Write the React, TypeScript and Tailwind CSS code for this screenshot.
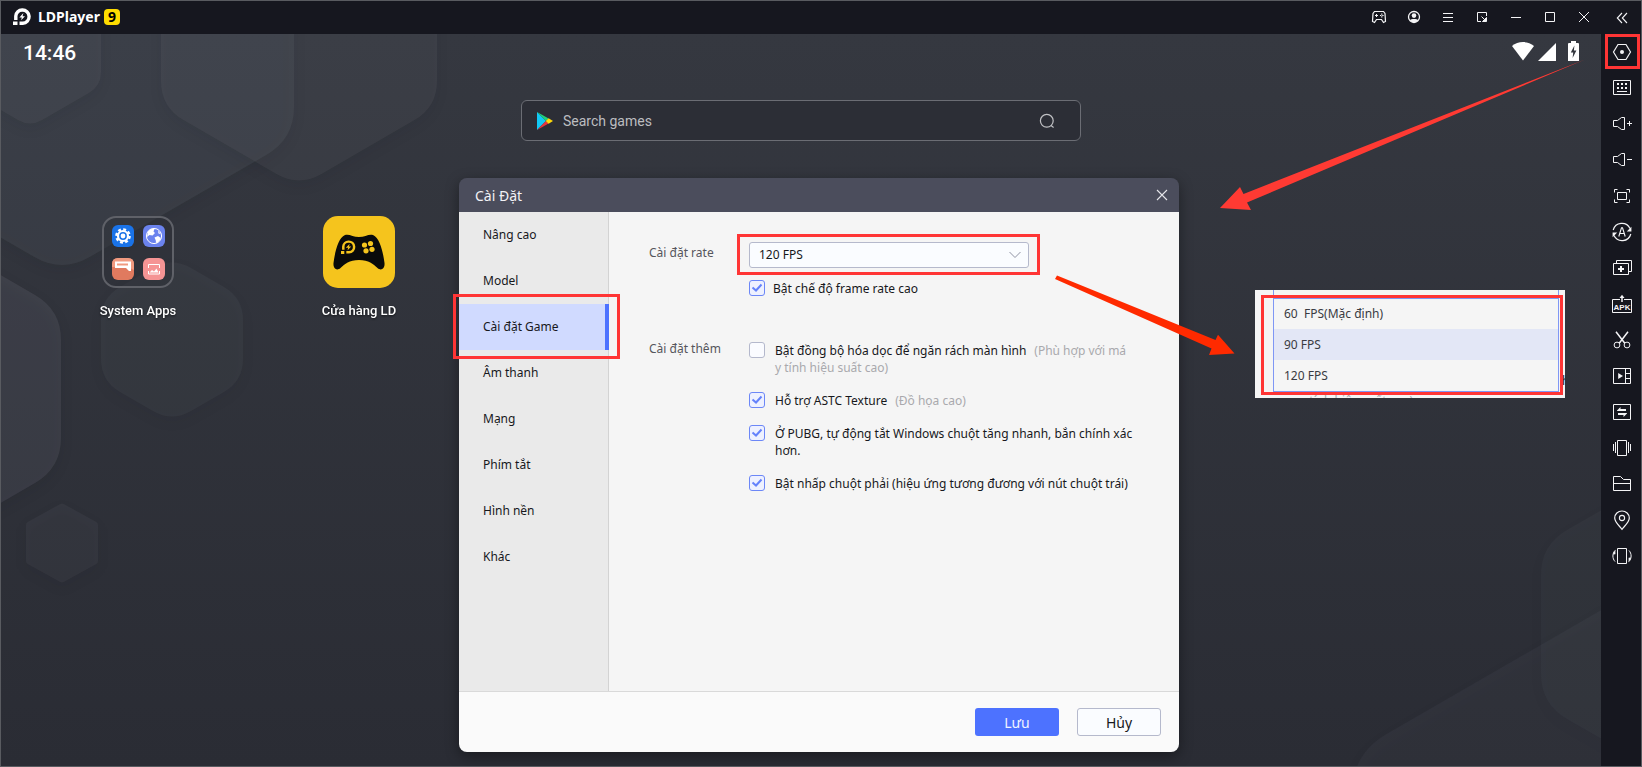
import type { ReactNode } from "react";

type Point = [number, number];

/* Closed polygon path whose corners are rounded by a curve that starts r units before each vertex. */
function roundedPolygon(points: Point[], r: number): string {
  const n = points.length;
  const toward = (from: Point, to: Point): Point => {
    const d = Math.hypot(to[0] - from[0], to[1] - from[1]);
    const k = Math.min(r, d / 2) / d;
    return [from[0] + (to[0] - from[0]) * k, from[1] + (to[1] - from[1]) * k];
  };
  return (
    points
      .map((p, i) => {
        const a = toward(p, points[(i + n - 1) % n]);
        const b = toward(p, points[(i + 1) % n]);
        return `${i === 0 ? "M" : "L"}${a[0]} ${a[1]}Q${p[0]} ${p[1]} ${b[0]} ${b[1]}`;
      })
      .join("") + "Z"
  );
}

const hexagons: { points: Point[]; r: number; opacity: number }[] = [
  { points: [[-170, -90], [294, -90], [294, 139], [62, 273], [-170, 139]], r: 32, opacity: 0.08 },
  { points: [[161, -90], [437, -90], [437, 107], [299, 187], [161, 107]], r: 26, opacity: 0.07 },
  { points: [[-40, -90], [101, -90], [101, 86], [30, 127], [-40, 86]], r: 14, opacity: 0.07 },
  { points: [[-60, 240], [61, 310], [61, 468], [-60, 538]], r: 30, opacity: 0.1 },
  { points: [[172, 257], [243, 298], [243, 381], [172, 422], [101, 381], [101, 298]], r: 22, opacity: 0.05 },
  { points: [[62, 503], [98, 523], [98, 563], [62, 583], [26, 563], [26, 523]], r: 2, opacity: 0.055 },
  { points: [[1541, 545], [1680, 465], [1680, 784], [1541, 704]], r: 30, opacity: 0.035 },
  { points: [[1352, 754], [1700, 553], [1700, 900], [1352, 900]], r: 40, opacity: 0.045 },
];

function Wallpaper() {
  return (
    <svg
      aria-hidden="true"
      className="absolute inset-0 h-full w-full"
      viewBox="1 34 1600 732"
      preserveAspectRatio="xMinYMin slice"
    >
      {hexagons.map((h, i) => (
        <path
          key={i}
          d={roundedPolygon(h.points, h.r)}
          fill="#b8bdcc"
          fillOpacity={h.opacity}
          className="drop-shadow-[0_5px_6px_rgba(10,12,22,0.9)]"
        />
      ))}
    </svg>
  );
}

function Icon({ children }: { children: ReactNode }) {
  return (
    <svg
      aria-hidden="true"
      className="size-5 shrink-0 overflow-visible"
      viewBox="0 0 20 20"
      fill="none"
      stroke="#f4f4f6"
      strokeWidth="1"
    >
      {children}
    </svg>
  );
}

const windowTools: { label: string; icon: ReactNode }[] = [
  {
    label: "Gamepad",
    icon: (
      <>
        <path d="M4.5 4.500H13.500L15 6.500L15.500 14.500L13.500 15.500L11.500 12.500H6.500L4.500 15.500L2.500 14.500L3 6.500Z" strokeWidth="1.200" />
        <path d="M5 8.500H8M6.500 7V10" />
        <path d="M10 8.500H11.400M12.200 8.500H13.600M11.800 6.600V7.800M11.800 9.200V10.400" strokeWidth="1.200" />
      </>
    ),
  },
  {
    label: "Account",
    icon: (
      <>
        <circle cx="10" cy="10" r="5.500" strokeWidth="1.300" />
        <circle cx="10" cy="8.600" r="2.300" fill="#f4f4f6" stroke="none" />
        <path d="M5.800 13.200C7 11.600 13 11.600 14.200 13.200C12.800 16 7.200 16 5.800 13.200Z" fill="#f4f4f6" stroke="none" />
      </>
    ),
  },
  { label: "Menu", icon: <path d="M5 6.500H15M5 10.500H15M5 14.500H15" /> },
  {
    label: "Shrink",
    icon: (
      <>
        <path d="M14.500 9V5.500H5.500V14.500H9" />
        <path d="M9.500 9.500L13 13" />
        <path d="M14.500 10.500V14.500H10.500Z" fill="#f4f4f6" />
      </>
    ),
  },
  { label: "Minimize", icon: <path d="M5 10.500H15" /> },
  { label: "Maximize", icon: <path d="M5.500 5.500H14.500V14.500H5.500Z" /> },
  { label: "Close", icon: <path d="M5 5L15 15M15 5L5 15" /> },
];

const speaker = "M1.500 6.500H5.500L9.500 3.500H12.500V15.500H9.500L5.500 12.500H1.500Z";

const sideTools: { label: string; icon: ReactNode }[] = [
  {
    label: "Settings",
    icon: (
      <>
        <path d="M6 2.500H14L18.500 10L14 17.500H6L1.500 10Z" strokeWidth="1.200" />
        <circle cx="10" cy="10" r="2" fill="#f4f4f6" stroke="none" />
      </>
    ),
  },
  {
    label: "Keyboard",
    icon: (
      <>
        <path d="M1.500 2.500H18.500V16.500H1.500Z" />
        <path d="M5 6H7M9 6H11M13 6H15M5 10H7M9 10H11M13 10H15" strokeWidth="2" />
        <path d="M5 13.500H15" />
      </>
    ),
  },
  {
    label: "Volume up",
    icon: (
      <>
        <path d={speaker} />
        <path d="M15 9.500H20M17.500 7V12" />
      </>
    ),
  },
  {
    label: "Volume down",
    icon: (
      <>
        <path d={speaker} />
        <path d="M15 9.500H20" />
      </>
    ),
  },
  {
    label: "Full screen",
    icon: (
      <>
        <path d="M5.500 6.500H14.500V13.500H5.500Z" />
        <path d="M2.500 6.500V3.500H5.500M14.500 3.500H17.500V6.500M17.500 13.500V16.500H14.500M5.500 16.500H2.500V13.500" />
      </>
    ),
  },
  {
    label: "Auto rotate",
    icon: (
      <>
        <path d="M1.200 8A9 9 0 0 1 18 6.400M18.800 12A9 9 0 0 1 2 13.600" strokeWidth="1.200" />
        <path d="M14.800 9.500H19.400V4.800ZM5.200 10.500H.6V15.200Z" fill="#f4f4f6" stroke="none" />
        <path d="M6.800 14.500L9.500 5.800H10.500L13.200 14.500M7.800 11.500H12.200" strokeWidth="1.100" />
      </>
    ),
  },
  {
    label: "Multi instance",
    icon: (
      <>
        <path d="M1.500 5.500H16.500V16.500H1.500Z" />
        <path d="M4.500 5V2.500H19.500V13.500H17" />
        <path d="M6 11H12M9 8V14" strokeWidth="2" />
      </>
    ),
  },
  {
    label: "Install APK",
    icon: (
      <>
        <path d="M8 5.500H.5V18.500H19.500V5.500H12" />
        <path d="M10 2V8" strokeWidth="1.500" />
        <path d="M7.500 4L10 .8L12.500 4Z" fill="#f4f4f6" stroke="none" />
        <text
          x="10"
          y="16"
          textAnchor="middle"
          fill="#f4f4f6"
          stroke="none"
          className="font-['Liberation_Sans',sans-serif] text-[8px] font-bold"
        >
          APK
        </text>
      </>
    ),
  },
  {
    label: "Cut",
    icon: (
      <>
        <path d="M4 1.800L12.800 13.200M16 1.800L7.200 13.200" strokeWidth="1.500" />
        <circle cx="5" cy="15" r="2.900" />
        <circle cx="15" cy="15" r="2.900" />
      </>
    ),
  },
  {
    label: "Video",
    icon: (
      <>
        <path d="M1.500 2.500H18.500V17.500H1.500ZM13.500 2.500V17.500M13.500 7.500H18.500M13.500 12.500H18.500" />
        <path d="M6.200 7L11 10L6.200 13Z" fill="#f4f4f6" stroke="none" />
      </>
    ),
  },
  {
    label: "Synchronizer",
    icon: (
      <>
        <path d="M1.500 2.500H18.500V17.500H1.500Z" />
        <path d="M5 8.500L8.500 5V7H14V9H5ZM15 11.500L11.500 15V13H6V11H15Z" fill="#f4f4f6" stroke="none" />
      </>
    ),
  },
  {
    label: "Shake",
    icon: <path d="M5.500 2.500H14.500V17.500H5.500ZM3.500 4V15M1.500 6V13M16.500 4V15M18.500 6V13" />,
  },
  { label: "Shared folder", icon: <path d="M1.500 2.500H8.500L11.500 5.500H18.500V16.500H1.500ZM1.500 9.500H18.500" /> },
  {
    label: "Location",
    icon: (
      <>
        <path d="M10 19.300C7 15.500 2.700 12 2.700 8A7.300 7 0 0 1 17.300 8C17.300 12 13 15.500 10 19.300Z" strokeWidth="1.200" />
        <circle cx="10" cy="8" r="2.600" strokeWidth="1.100" />
      </>
    ),
  },
  {
    label: "Rotate screen",
    icon: (
      <>
        <path d="M5.500 2.500H14.500V17.500H5.500Z" />
        <path d="M3 4.500C.2 7.500 .2 12.500 3 15.500M17 4.500C19.800 7.500 19.800 12.500 17 15.500" />
        <path d="M3.400 3.600L.8 8.600L3.400 8.200ZM16.600 16.400L19.200 11.400L16.600 11.800Z" fill="#f4f4f6" stroke="none" />
      </>
    ),
  },
];

function PlayerMark({ className }: { className: string }) {
  return (
    <svg aria-hidden="true" className={className} viewBox="0 0 18 18" fill="none">
      <path d="M2.800 12V8A6.300 6.300 0 0 1 9.200 2A6.400 6.400 0 0 1 9.800 15.200H6.500" stroke="white" strokeWidth="3.400" />
      <path d="M0 13.500H4.500V17H0Z" fill="white" />
      <path d="M10.400 5L6.400 9.400H8.800L8.100 12.200L12 8.200H9.600Z" fill="white" />
    </svg>
  );
}

function TitleBar() {
  return (
    <header className="flex h-[33px] bg-[#16171f]">
      <div className="flex h-8 flex-1 items-center pl-3">
        <PlayerMark className="size-[18px]" />
        <span className="ml-[7px] font-['Noto_Sans',sans-serif] text-[14px] leading-8 font-bold text-white">LDPlayer</span>
        <span className="ml-1 flex size-4 items-center justify-center rounded-sm bg-[#ffdc00] font-['Noto_Sans',sans-serif] text-[14px] leading-4 font-bold text-black">
          9
        </span>
      </div>
      {windowTools.map((t) => (
        <button key={t.label} type="button" aria-label={t.label} className="flex h-8 w-[34px] items-center justify-center">
          <Icon>{t.icon}</Icon>
        </button>
      ))}
      <button type="button" aria-label="Collapse toolbar" className="flex h-8 w-10 items-center justify-center pl-0.5">
        <Icon>
          <path d="M10 6L5.300 11L10 16M15 6L10.300 11L15 16" strokeWidth="1.100" />
        </Icon>
      </button>
    </header>
  );
}

function SideBar() {
  return (
    <nav aria-label="Toolbar" className="flex w-10 shrink-0 flex-col bg-[#16171f]">
      {sideTools.map((t, i) => (
        <button key={t.label} type="button" aria-label={t.label} className="relative flex h-9 items-center justify-center pl-0.5">
          <Icon>{t.icon}</Icon>
          {i === 0 && <span className="absolute top-0 left-1 size-[35px] border-3 border-[#ff3535]" />}
        </button>
      ))}
    </nav>
  );
}

function StatusBar() {
  return (
    <div className="relative flex h-10 items-start justify-between px-[22px] text-white">
      <span className="pt-1 font-['Roboto',sans-serif] text-[21px] leading-[30px] font-medium">14:46</span>
      <div className="flex items-end gap-1 pt-[7px]">
        <svg aria-label="Wi-Fi" className="h-5 w-[22px]" viewBox="0 0 22 20" fill="white">
          <path d="M0 5C6 -.2 16 -.2 22 5L11 19.600Z" />
        </svg>
        <svg aria-label="Signal" className="h-5 w-[18px]" viewBox="0 0 18 20" fill="white">
          <path d="M18 2V20H0Z" />
        </svg>
        <svg aria-label="Battery" className="ml-2 h-5 w-[11px]" viewBox="0 0 11 20" fill="white">
          <path d="M3 0H8V2H10Q11 2 11 3V20H0V3Q0 2 1 2H3Z" />
          <path d="M6.400 4.500L2.800 11.500H5.200L4.600 17L8.400 9.600H5.900Z" fill="#33363e" />
        </svg>
      </div>
    </div>
  );
}

function SearchBox() {
  return (
    <form
      role="search"
      className="relative mx-auto mt-[26px] flex h-[41px] w-[560px] max-w-full items-center rounded-md border border-[#6b6d74] bg-[#2c2e36] pr-[25px] pl-[15px]"
    >
      <svg aria-hidden="true" className="h-[18px] w-4" viewBox="0 0 16 18">
        <path d="M0 0V18L9 9Z" fill="#12c8f5" />
        <path d="M0 0L9 9L11.600 6.400Z" fill="#1fd07a" />
        <path d="M0 18L9 9L11.600 11.600Z" fill="#e8343c" />
        <path d="M11.600 6.200L16 9L11.600 11.800L8.800 9Z" fill="#ffd90a" />
      </svg>
      <input
        type="text"
        aria-label="Search games"
        placeholder="Search games"
        className="ml-2.5 min-w-0 flex-1 bg-transparent pt-0.5 font-['Roboto',sans-serif] text-[14px] text-white outline-none placeholder:text-[#bcbdc0]"
      />
      <button type="button" aria-label="Search" className="flex size-4 items-center justify-center">
        <svg aria-hidden="true" className="size-4" viewBox="0 0 16 16" fill="none" stroke="#c0c1c4" strokeWidth="1.200">
          <circle cx="7.800" cy="7.800" r="6.400" />
          <path d="M12 12.400L14.600 14.400" />
        </svg>
      </button>
    </form>
  );
}

function AppShortcuts() {
  return (
    <ul className="relative mt-[75px] flex gap-[109px] pl-[81px] font-['Roboto',sans-serif] text-[13px] font-medium text-white">
      <li>
        <button type="button" className="flex w-28 flex-col items-center">
          <span className="grid size-[72px] grid-cols-[22px_22px] place-content-center gap-x-[9px] gap-y-[11px] rounded-[14px] border-2 border-[#5f6168] bg-[#2d2f37]/40">
            <svg aria-hidden="true" className="size-[22px]" viewBox="0 0 22 22">
              <rect width="22" height="22" rx="6" fill="#1a73e8" />
              <circle cx="11" cy="11" r="6.600" fill="none" stroke="white" strokeWidth="2.400" strokeDasharray="2.9 2.28" />
              <circle cx="11" cy="11" r="5" fill="none" stroke="white" strokeWidth="2.200" />
              <circle cx="11" cy="11" r="2.400" fill="white" />
            </svg>
            <svg aria-hidden="true" className="size-[22px]" viewBox="0 0 22 22">
              <rect width="22" height="22" rx="6" fill="#6b83ee" />
              <circle cx="11" cy="11" r="7.600" fill="none" stroke="white" strokeWidth="1" />
              <path d="M5 6.500C7 4 10 3.500 11.500 4L10.500 6.500L12 8L9.500 10.500L6.500 10L4 12Z" fill="white" />
              <path d="M11.500 12.500L15 11L17.800 13C17 16 15 17.500 13 18L12.800 15.500ZM15 5.500L17.800 9L15.500 8.500Z" fill="white" />
            </svg>
            <svg aria-hidden="true" className="size-[22px]" viewBox="0 0 22 22">
              <rect width="22" height="22" rx="6" fill="#e07a5f" />
              <path d="M0 9V6Q0 0 6 0H16Q22 0 22 6V12L16 9Z" fill="#f09a80" />
              <path d="M3 3.500H19V13H17L14 10H3ZM5 5.500V7.500H16V5.500Z" fill="white" fillRule="evenodd" />
            </svg>
            <svg aria-hidden="true" className="size-[22px]" viewBox="0 0 22 22">
              <rect width="22" height="22" rx="6" fill="#f59494" />
              <path d="M5.500 10V6.500H16.500V10M5.500 13V16H16.500V13" fill="none" stroke="white" strokeWidth="1" />
              <path d="M6.500 14.500L9 12L11 13.500L13.500 10.500L15.500 14.500Z" fill="white" />
            </svg>
          </span>
          <span className="mt-3 pt-px leading-5 drop-shadow-[0_1px_1px_rgba(0,0,0,0.6)]">System Apps</span>
        </button>
      </li>
      <li>
        <button type="button" className="flex w-28 flex-col items-center">
          <svg aria-hidden="true" className="size-[72px]" viewBox="0 0 72 72">
            <rect width="72" height="72" rx="15" fill="#f5c41d" />
            <path
              d="M22 19C26 17.500 30 21 36 21C42 21 46 17.500 50 19C57 22 60 36 61.500 47C62 52 58.500 55.500 54.500 52C50 48 46 44 36 44C26 44 22 48 17.500 52C13.500 55.500 10 52 10.500 47C12 36 15 22 22 19Z"
              fill="#0a0a0a"
            />
            <g transform="translate(18 24) scale(.82)" fill="none">
              <path d="M2.800 12V8A6.300 6.300 0 0 1 9.200 2A6.400 6.400 0 0 1 9.800 15H6.500" stroke="#f5c41d" strokeWidth="3" />
              <path d="M0 13.500H4V17H0ZM10.600 4.600L5.900 9.600H8.800L7.900 12.800L12.400 8H9.700Z" fill="#f5c41d" />
            </g>
            <g fill="#f5c41d">
              <circle cx="41.500" cy="29" r="2.600" />
              <circle cx="47.500" cy="27.500" r="2.600" />
              <circle cx="43" cy="34.800" r="2.600" />
              <circle cx="49" cy="33.300" r="2.600" />
            </g>
          </svg>
          <span className="mt-3 pt-px leading-5 drop-shadow-[0_1px_1px_rgba(0,0,0,0.6)]">Cửa hàng LD</span>
        </button>
      </li>
    </ul>
  );
}

function CheckRow({
  id,
  checked,
  children,
  gap,
}: {
  id: string;
  checked: boolean;
  children: ReactNode;
  gap: string;
}) {
  return (
    <div className={`flex items-start ${gap}`}>
      <span className="grid size-4 shrink-0 place-items-center">
        <input
          id={id}
          type="checkbox"
          defaultChecked={checked}
          className="peer col-start-1 row-start-1 size-4 appearance-none rounded-[3px] border border-[#b4b8cc] bg-[#fafbff] checked:border-[#6c87f7] checked:bg-[#eef1ff]"
        />
        <svg
          aria-hidden="true"
          className="pointer-events-none invisible col-start-1 row-start-1 size-4 peer-checked:visible"
          viewBox="0 0 16 16"
          fill="none"
          stroke="#6482fb"
          strokeWidth="2"
        >
          <path d="M3.500 7.500L7 10.500L12.500 4.500" />
        </svg>
      </span>
      <label htmlFor={id} className="leading-[17px]">
        {children}
      </label>
    </div>
  );
}

const sections = ["Nâng cao", "Model", "Cài đặt Game", "Âm thanh", "Mạng", "Phím tắt", "Hình nền", "Khác"];

function SettingsDialog() {
  return (
    <section
      role="dialog"
      aria-label="Cài Đặt"
      className="absolute top-[144px] left-[458px] flex w-[720px] flex-col rounded-lg font-['Noto_Sans',sans-serif] text-[12px] text-[#17181c] shadow-[0_4px_14px_rgba(0,0,0,0.4)]"
    >
      <header className="flex h-[34px] items-center justify-between rounded-t-lg bg-[#4b4d5c] pr-[11px] pl-4">
        <h1 className="text-[14px] text-[#f2f2f5]">Cài Đặt</h1>
        <button type="button" aria-label="Close settings" className="flex size-3 items-center justify-center">
          <svg aria-hidden="true" className="size-3" viewBox="0 0 12 12" stroke="#e6e6ea" strokeWidth="1.100">
            <path d="M1 1L11 11M11 1L1 11" />
          </svg>
        </button>
      </header>

      <div className="flex h-[480px] border-b border-[#d9d9d9] bg-[#f5f5f5]">
        <nav aria-label="Sections" className="w-[150px] border-r border-[#d3d3d3] bg-[#eaeaea]">
          {sections.map((s) =>
            s === "Cài đặt Game" ? (
              <button
                key={s}
                type="button"
                aria-current="page"
                className="relative -mr-px flex h-[46px] w-[150px] items-center border-r-4 border-[#4d72ff] bg-[#d0daff] pl-6"
              >
                {s}
                <span className="absolute -top-2.5 -left-1.5 h-[65px] w-[167px] border-3 border-[#ff3535]" />
              </button>
            ) : (
              <button key={s} type="button" className="flex h-[46px] w-full items-center pl-6">
                {s}
              </button>
            ),
          )}
        </nav>

        <div className="grid flex-1 grid-cols-[100px_1fr] content-start pt-[30px] pr-[34px] pl-10">
          <label htmlFor="fps" className="pt-0.5 leading-[17px] text-[#55565c]">
            Cài đặt rate
          </label>
          <div>
            <div className="relative flex h-[26px] w-[280px] items-center">
              <select
                id="fps"
                defaultValue="120"
                className="size-full appearance-none rounded-[3px] border border-[#b5b9cc] bg-[#fafcff] pl-[9px] text-[12px] text-[#17181c]"
              >
                <option value="60">60 FPS(Mặc định)</option>
                <option value="90">90 FPS</option>
                <option value="120">120 FPS</option>
              </select>
              <svg
                aria-hidden="true"
                className="pointer-events-none absolute right-2 h-2 w-3"
                viewBox="0 0 12 8"
                fill="none"
                stroke="#8f92a3"
              >
                <path d="M.5 1L6 6.500L11.500 1" />
              </svg>
              <span className="pointer-events-none absolute -top-2 -right-[11px] -bottom-[7px] -left-3 border-3 border-[#ff3535]" />
            </div>
            <div className="mt-3">
              <CheckRow id="high-fps" checked gap="gap-2">
                Bật chế độ frame rate cao
              </CheckRow>
            </div>
          </div>

          <p className="mt-[43px] leading-[17px] text-[#55565c]">Cài đặt thêm</p>
          <div className="mt-[45px] flex flex-col gap-4">
            <CheckRow id="vsync" checked={false} gap="gap-2.5">
              Bật đồng bộ hóa dọc để ngăn rách màn hình
              <span className="ml-2 text-[#a9a9ad]">
                (Phù hợp với má
                <br />y tính hiệu suất cao)
              </span>
            </CheckRow>
            <CheckRow id="astc" checked gap="gap-2.5">
              Hỗ trợ ASTC Texture
              <span className="ml-2 text-[#a9a9ad]">(Đồ họa cao)</span>
            </CheckRow>
            <CheckRow id="pubg" checked gap="gap-2.5">
              Ở PUBG, tự động tắt Windows chuột tăng nhanh, bắn chính xác
              <br />
              hơn.
            </CheckRow>
            <CheckRow id="right-click" checked gap="gap-2.5">
              Bật nhấp chuột phải (hiệu ứng tương đương với nút chuột trái)
            </CheckRow>
          </div>
        </div>
      </div>

      <footer className="flex h-[60px] items-center justify-end gap-[18px] rounded-b-lg bg-[#fafafa] px-[18px] text-[14px]">
        <button type="button" className="h-7 w-[84px] rounded-[3px] bg-[#4d72ff] text-[#f0f3ff]">
          Lưu
        </button>
        <button type="button" className="h-7 w-[84px] rounded-[3px] border border-[#b5b9cc] bg-[#fafcff]">
          Hủy
        </button>
      </footer>
    </section>
  );
}

function RateOptions() {
  return (
    <div className="absolute top-[256px] left-[1254px] h-[108px] w-[310px] overflow-hidden bg-[#f5f5f5] font-['Noto_Sans',sans-serif] text-[12px] text-[#3a3b42]">
      <div className="mr-[6px] ml-[18px] border-x border-[#7f97f5] pt-2">
        <ul aria-label="Frame rate" className="border-y border-[#7f97f5]">
          <li className="flex h-[30px] items-center pl-2.5 whitespace-pre">{"60  FPS(Mặc định)"}</li>
          <li className="flex h-[31px] items-center bg-[#e3e7f6] pl-2.5">90 FPS</li>
          <li className="flex h-[31px] items-center pl-2.5">120 FPS</li>
        </ul>
      </div>
      <p className="pl-[45px] leading-[17px] text-[#a9a9ad]">y tính hiệu suất cao)</p>
      <span className="absolute top-[82px] left-[307px] leading-[17px] text-[#17181c]">h</span>
      <span className="absolute top-[5px] left-1.5 h-[100px] w-[302px] border-3 border-[#ff3535]" />
    </div>
  );
}

function Arrows() {
  return (
    <svg aria-hidden="true" className="pointer-events-none absolute top-0 left-0 h-[732px] w-[1600px]" viewBox="1 34 1600 732">
      <path d="M1585 59.500L1247 202.500L1251 210L1220 208L1240 187L1243.500 194Z" fill="#ff3a33" />
      <path d="M1057 275.500L1215.500 340L1218 334.700L1234.500 353.500L1209 355L1211.500 348.500L1055 279Z" fill="#ff2a00" />
    </svg>
  );
}

export default function App() {
  return (
    <div className="flex min-h-screen flex-col border border-[#595b60]">
      <TitleBar />
      <div className="flex flex-1">
        <main className="relative min-w-0 flex-1 overflow-hidden bg-linear-to-b from-[#353840] to-[#2a2c34]">
          <Wallpaper />
          <StatusBar />
          <SearchBox />
          <AppShortcuts />
          <SettingsDialog />
          <RateOptions />
          <Arrows />
        </main>
        <SideBar />
      </div>
    </div>
  );
}
